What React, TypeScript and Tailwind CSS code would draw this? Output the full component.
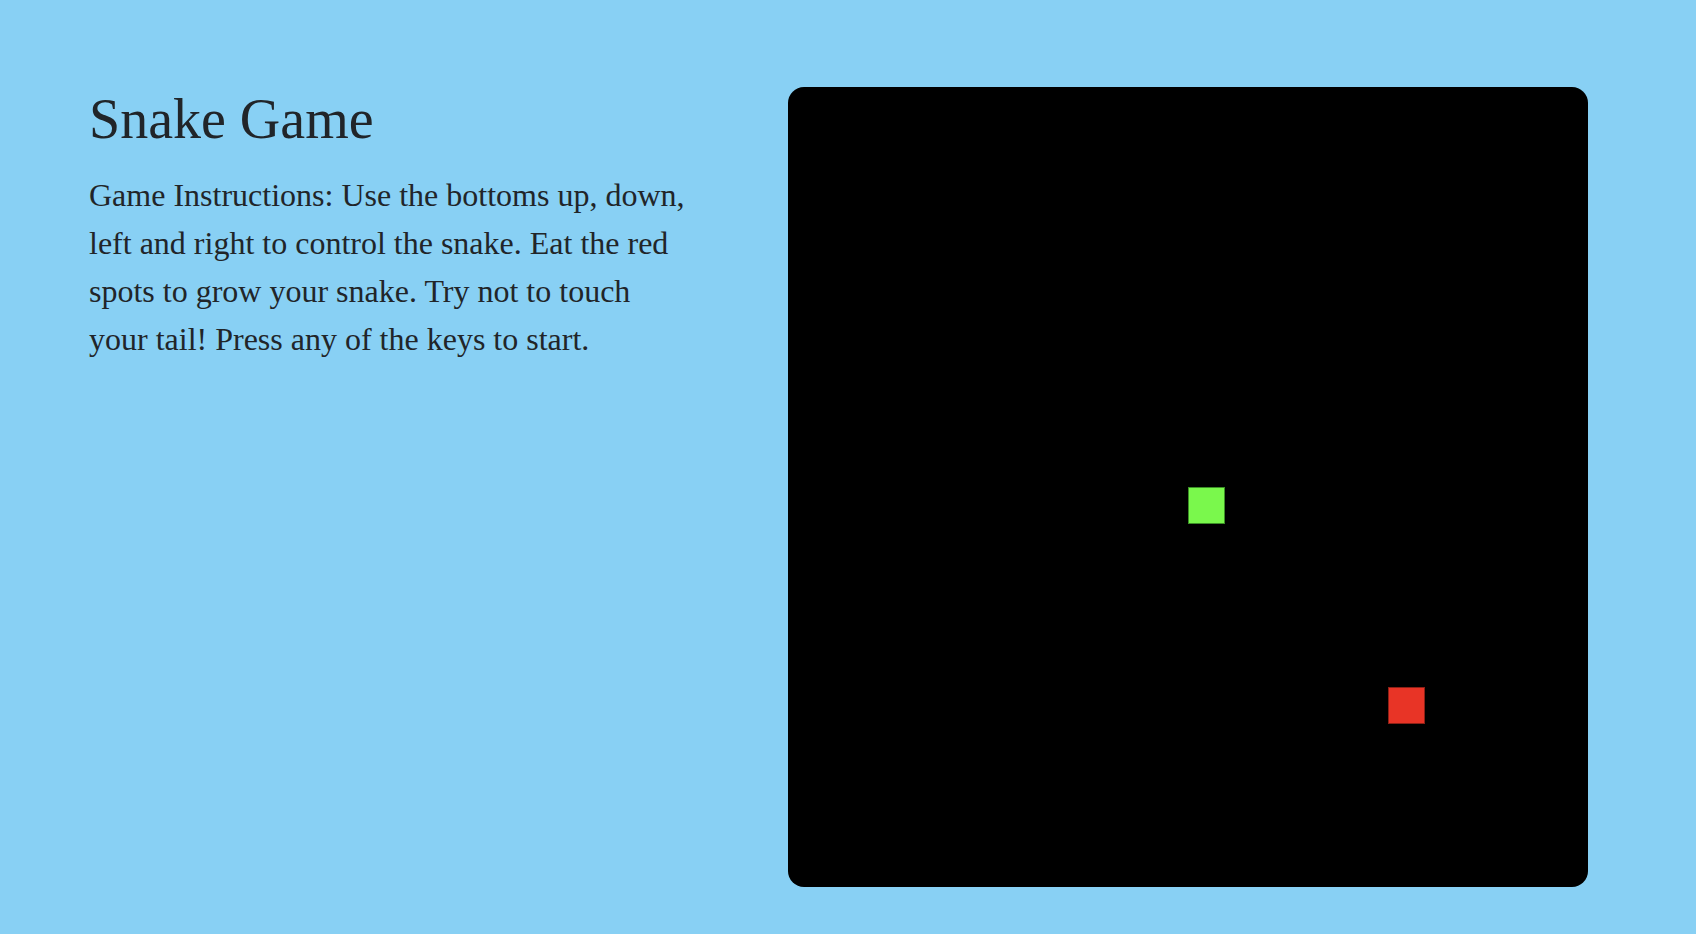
import React from 'react';

type Cell = { x: number; y: number };

const snake: Cell[] = [{ x: 400, y: 400 }];
const food: Cell = { x: 600, y: 600 };

const App: React.FC = () => {
  return (
    <div className="min-h-screen w-full bg-[#88d0f4] text-[#212529] font-['Liberation_Serif','Times_New_Roman',serif]">
      <div className="flex items-start pl-[89px] pt-[86px] pb-[47px]">
        {/* Left: title + instructions */}
        <div className="w-[600px] shrink-0">
          <h1 className="text-[56px] leading-[1.2] font-normal">Snake Game</h1>
          <p className="mt-[18px] text-[32px] leading-[48px]">
            Game Instructions: Use the bottoms up, down, left and right to control the snake. Eat the red spots
            to grow your snake. Try not to touch your tail! Press any of the keys to start.
          </p>
        </div>

        {/* Right: board */}
        <div className="relative ml-[99px] mt-[1px] h-[800px] w-[800px] shrink-0 overflow-hidden rounded-2xl bg-black">
          {snake.map((c, i) => (
            <div
              key={i}
              className="absolute h-[37px] w-[37px] border border-[#3b8f26] bg-[#7af84c]"
              style={{ left: c.x, top: c.y }}
            />
          ))}
          <div
            className="absolute h-[37px] w-[37px] border border-[#8c2016] bg-[#e83426]"
            style={{ left: food.x, top: food.y }}
          />
        </div>
      </div>
    </div>
  );
};

export default App;
